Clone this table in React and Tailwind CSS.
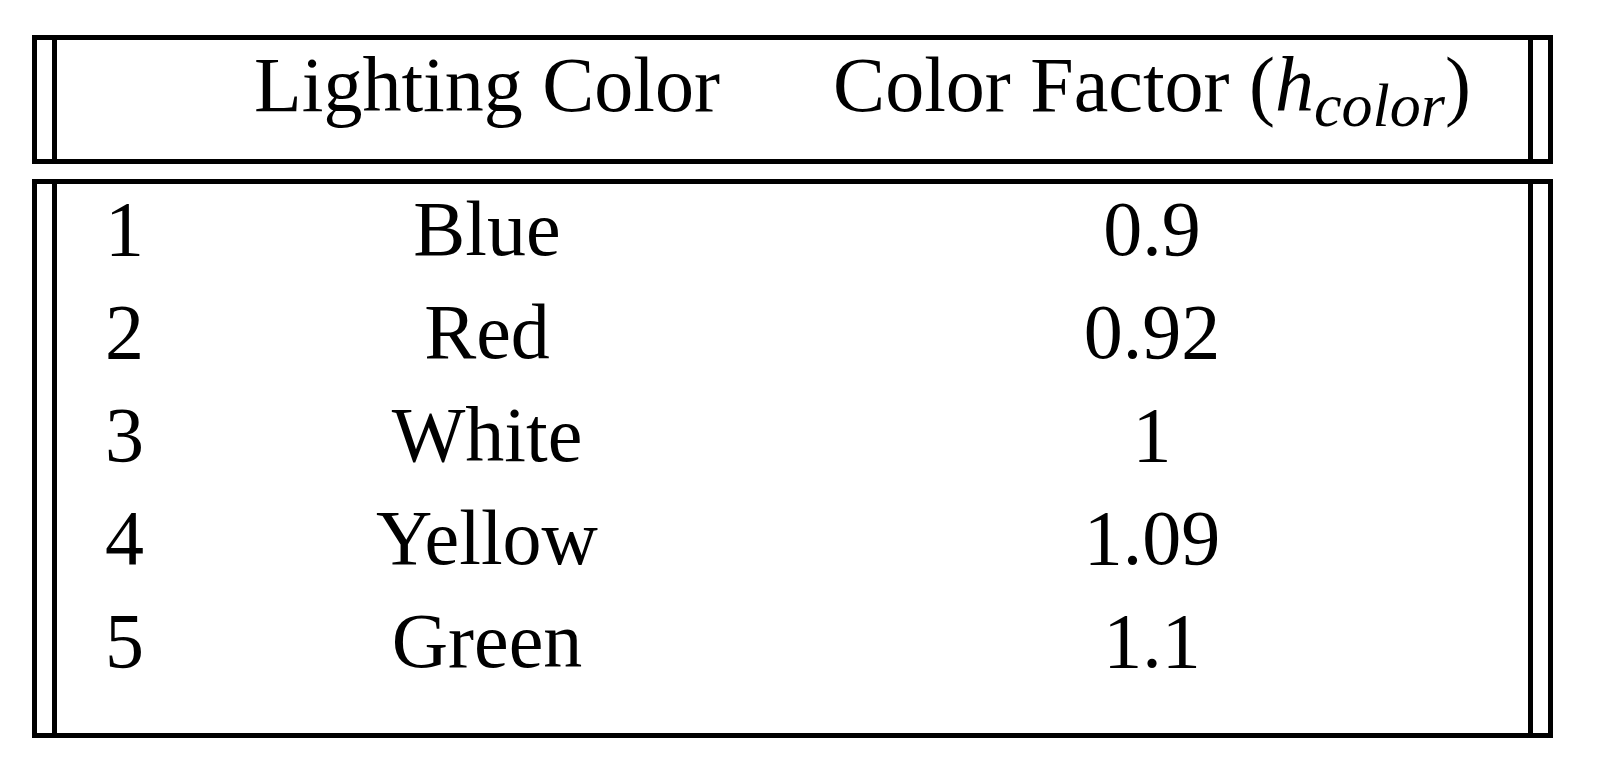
import React from "react";

const rows = [
  { n: "1", color: "Blue", factor: "0.9" },
  { n: "2", color: "Red", factor: "0.92" },
  { n: "3", color: "White", factor: "1" },
  { n: "4", color: "Yellow", factor: "1.09" },
  { n: "5", color: "Green", factor: "1.1" },
];

function Box({ children, height }) {
  return (
    <div className="border-[5px] border-black">
      <div className={`mx-[15px] border-x-[5px] border-black ${height}`}>
        {children}
      </div>
    </div>
  );
}

export default function App() {
  return (
    <div
      className="min-h-screen w-[1603px] bg-white pl-[32px] pt-[35px] text-black"
      style={{ fontFamily: '"Liberation Serif", "Times New Roman", serif' }}
    >
      <div className="flex w-[1521px] flex-col gap-[15px] text-[78px] leading-[88px]">
        {/* Header */}
        <Box height="h-[119px]">
          <div className="grid grid-cols-[132px_596px_734px] pt-px">
            <div />
            <div className="text-center">Lighting Color</div>
            <div className="whitespace-nowrap text-center">
              Color Factor (<span className="italic">h</span>
              <span className="relative top-[15px] text-[62px] italic">
                color
              </span>
              )
            </div>
          </div>
        </Box>

        {/* Body */}
        <Box height="h-[549px]">
          <div className="grid grid-cols-[132px_596px_734px] gap-y-[15px] pt-px">
            {rows.map((r) => (
              <React.Fragment key={r.n}>
                <div className="pl-[48px]">{r.n}</div>
                <div className="text-center">{r.color}</div>
                <div className="text-center">{r.factor}</div>
              </React.Fragment>
            ))}
          </div>
        </Box>
      </div>
    </div>
  );
}
